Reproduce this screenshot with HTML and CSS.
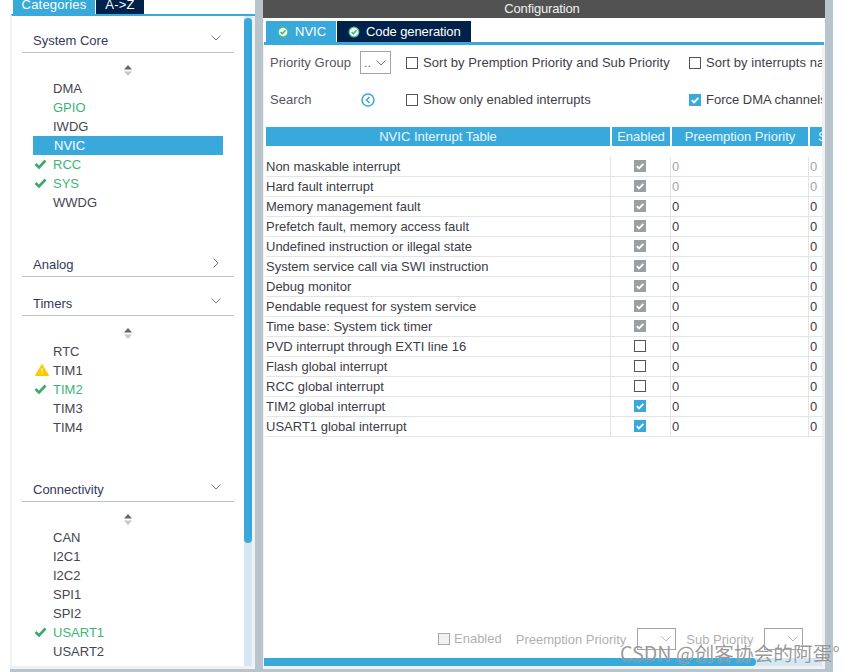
FILE: index.html
```html
<!DOCTYPE html>
<html lang="en">
<head>
<meta charset="utf-8">
<title>NVIC Configuration</title>
<link rel="stylesheet" href="styles.css">
</head>
<body>
<svg class="defs" width="0" height="0" aria-hidden="true">
  <symbol id="down" viewBox="0 0 10 6"><path d="M.5.5 5 5 9.500.5" fill="none" stroke="currentColor"/></symbol>
  <symbol id="right" viewBox="0 0 6 10"><path d="M.5.5 5 5 .5 9.500" fill="none" stroke="currentColor"/></symbol>
  <symbol id="spin" viewBox="0 0 8 11"><path d="M4 0 8 4.500H0Z" fill="#666"/><path d="M0 6.500H8L4 11Z" fill="#c8c8c8"/></symbol>
  <symbol id="ok" viewBox="0 0 12 10"><path d="M1 5 4.500 8.500 11 1.500" fill="none" stroke="#3fa96b" stroke-width="2.600"/></symbol>
  <symbol id="warn" viewBox="0 0 14 12"><path d="M7 .5 13.600 11.500H.4Z" fill="#fcc900" stroke="#fcc900" stroke-linejoin="round"/><path d="M7 4v4M7 9v1.200" stroke="#fff" stroke-width="1"/></symbol>
  <symbol id="tick" viewBox="0 0 12 12"><path d="M2.800 6.200 5 8.400 9.400 3.800" fill="none" stroke="#fff" stroke-width="1.800"/></symbol>
  <symbol id="done" viewBox="0 0 12 12"><circle cx="6" cy="6" r="5.500" fill="#4db88a"/><circle cx="6" cy="6" r="4.300" fill="#eef9f4"/><path d="M3.600 6 5.400 7.700 8.500 4.300" fill="none" stroke="#42b080" stroke-width="1.500"/></symbol>
</svg>
<div class="app">
  <div class="main">
    <aside class="left">
      <div class="left-tabs">
        <div class="ltab ltab-on">Categories</div>
        <div class="ltab ltab-off">A-&gt;Z</div>
      </div>
      <div class="left-body">
        <div class="tree">
          <div class="head"><span>System Core</span><svg class="chev"><use href="#down"/></svg></div>
          <div class="spin"><svg class="spin-ic"><use href="#spin"/></svg></div>
          <ul class="list">
            <li class="item"><span class="ic"></span>DMA</li>
            <li class="item good"><span class="ic"></span>GPIO</li>
            <li class="item"><span class="ic"></span>IWDG</li>
            <li class="item sel"><span class="ic"></span>NVIC</li>
            <li class="item good"><span class="ic"><svg class="ok"><use href="#ok"/></svg></span>RCC</li>
            <li class="item good"><span class="ic"><svg class="ok"><use href="#ok"/></svg></span>SYS</li>
            <li class="item"><span class="ic"></span>WWDG</li>
          </ul>
          <div class="head far"><span>Analog</span><svg class="chev-r"><use href="#right"/></svg></div>
          <div class="head near"><span>Timers</span><svg class="chev"><use href="#down"/></svg></div>
          <div class="spin"><svg class="spin-ic"><use href="#spin"/></svg></div>
          <ul class="list">
            <li class="item"><span class="ic"></span>RTC</li>
            <li class="item"><span class="ic"><svg class="warn"><use href="#warn"/></svg></span>TIM1</li>
            <li class="item good"><span class="ic"><svg class="ok"><use href="#ok"/></svg></span>TIM2</li>
            <li class="item"><span class="ic"></span>TIM3</li>
            <li class="item"><span class="ic"></span>TIM4</li>
          </ul>
          <div class="head far"><span>Connectivity</span><svg class="chev"><use href="#down"/></svg></div>
          <div class="spin"><svg class="spin-ic"><use href="#spin"/></svg></div>
          <ul class="list">
            <li class="item"><span class="ic"></span>CAN</li>
            <li class="item"><span class="ic"></span>I2C1</li>
            <li class="item"><span class="ic"></span>I2C2</li>
            <li class="item"><span class="ic"></span>SPI1</li>
            <li class="item"><span class="ic"></span>SPI2</li>
            <li class="item good"><span class="ic"><svg class="ok"><use href="#ok"/></svg></span>USART1</li>
            <li class="item"><span class="ic"></span>USART2</li>
            <li class="item"><span class="ic"></span>USART3</li>
          </ul>
        </div>
        <div class="vtrack"><div class="vthumb"></div></div>
      </div>
    </aside>
    <div class="split"></div>
    <section class="right">
      <div class="title">Configuration</div>
      <div class="rtabs">
        <div class="rtab rtab-on"><svg class="done"><use href="#done"/></svg>NVIC</div>
        <div class="rtab rtab-off"><svg class="done"><use href="#done"/></svg>Code generation</div>
      </div>
      <div class="tabline"></div>
      <div class="pane">
        <div class="tools">
          <div class="lbl">Priority Group</div>
          <div class="select sel-pg"><span>..</span><svg class="chev"><use href="#down"/></svg></div>
          <label class="opt opt-wide"><span class="box"></span>Sort by Premption Priority and Sub Priority</label>
          <label class="opt opt-wide"><span class="box"></span>Sort by interrupts names</label>
          <div class="lbl">Search</div>
          <svg class="go" viewBox="0 0 14 14"><circle cx="7" cy="7" r="6" fill="none" stroke="#39a9dc" stroke-width="1.500"/><path d="M8.500 4 5.500 7 8.500 10" fill="none" stroke="#39a9dc" stroke-width="1.600"/></svg>
          <label class="opt"><span class="box"></span>Show only enabled interrupts</label>
          <label class="opt"><span class="box box-on"><svg class="tick"><use href="#tick"/></svg></span>Force DMA channels Interrupts</label>
        </div>
        <div class="thead">
          <div class="th">NVIC Interrupt Table</div>
          <div class="th">Enabled</div>
          <div class="th">Preemption Priority</div>
          <div class="th th-cut">Sub Priority</div>
        </div>
        <div class="tbody">
          <div class="row muted"><div class="c-name">Non maskable interrupt</div><div class="c-en"><span class="box box-dis"><svg class="tick"><use href="#tick"/></svg></span></div><div class="c-num">0</div><div class="c-num">0</div></div>
          <div class="row muted"><div class="c-name">Hard fault interrupt</div><div class="c-en"><span class="box box-dis"><svg class="tick"><use href="#tick"/></svg></span></div><div class="c-num">0</div><div class="c-num">0</div></div>
          <div class="row"><div class="c-name">Memory management fault</div><div class="c-en"><span class="box box-dis"><svg class="tick"><use href="#tick"/></svg></span></div><div class="c-num">0</div><div class="c-num">0</div></div>
          <div class="row"><div class="c-name">Prefetch fault, memory access fault</div><div class="c-en"><span class="box box-dis"><svg class="tick"><use href="#tick"/></svg></span></div><div class="c-num">0</div><div class="c-num">0</div></div>
          <div class="row"><div class="c-name">Undefined instruction or illegal state</div><div class="c-en"><span class="box box-dis"><svg class="tick"><use href="#tick"/></svg></span></div><div class="c-num">0</div><div class="c-num">0</div></div>
          <div class="row"><div class="c-name">System service call via SWI instruction</div><div class="c-en"><span class="box box-dis"><svg class="tick"><use href="#tick"/></svg></span></div><div class="c-num">0</div><div class="c-num">0</div></div>
          <div class="row"><div class="c-name">Debug monitor</div><div class="c-en"><span class="box box-dis"><svg class="tick"><use href="#tick"/></svg></span></div><div class="c-num">0</div><div class="c-num">0</div></div>
          <div class="row"><div class="c-name">Pendable request for system service</div><div class="c-en"><span class="box box-dis"><svg class="tick"><use href="#tick"/></svg></span></div><div class="c-num">0</div><div class="c-num">0</div></div>
          <div class="row"><div class="c-name">Time base: System tick timer</div><div class="c-en"><span class="box box-dis"><svg class="tick"><use href="#tick"/></svg></span></div><div class="c-num">0</div><div class="c-num">0</div></div>
          <div class="row"><div class="c-name">PVD interrupt through EXTI line 16</div><div class="c-en"><span class="box"></span></div><div class="c-num">0</div><div class="c-num">0</div></div>
          <div class="row"><div class="c-name">Flash global interrupt</div><div class="c-en"><span class="box"></span></div><div class="c-num">0</div><div class="c-num">0</div></div>
          <div class="row"><div class="c-name">RCC global interrupt</div><div class="c-en"><span class="box"></span></div><div class="c-num">0</div><div class="c-num">0</div></div>
          <div class="row"><div class="c-name">TIM2 global interrupt</div><div class="c-en"><span class="box box-on"><svg class="tick"><use href="#tick"/></svg></span></div><div class="c-num">0</div><div class="c-num">0</div></div>
          <div class="row"><div class="c-name">USART1 global interrupt</div><div class="c-en"><span class="box box-on"><svg class="tick"><use href="#tick"/></svg></span></div><div class="c-num">0</div><div class="c-num">0</div></div>
        </div>
        <div class="foot">
          <span class="box box-off"></span><span class="foot-en">Enabled</span>
          <span class="foot-pre">Preemption Priority</span>
          <div class="select sel-f"><svg class="chev"><use href="#down"/></svg></div>
          <span class="foot-sub">Sub Priority</span>
          <div class="select sel-f"><svg class="chev"><use href="#down"/></svg></div>
        </div>
        <div class="htrack"><div class="hthumb"></div></div>
      </div>
    </section>
    <div class="edge"></div>
  </div>
  <div class="base"></div>
</div>
<div class="mark">CSDN @创客协会的阿蛋°</div>
</body>
</html>
```
FILE: styles.css
```css
* { box-sizing: border-box; }
html, body { margin: 0; padding: 0; }
body {
  position: relative;
  width: 855px;
  height: 672px;
  overflow: hidden;
  background: #fff;
  font-family: "Liberation Sans", Roboto, sans-serif;
  font-size: 13px;
  color: #45454f;
}
.defs { position: absolute; }
svg { display: block; flex: none; }
ul { list-style: none; margin: 0; padding: 0; }

.app { display: flex; flex-direction: column; width: 823px; height: 672px; margin-left: 10px; }
.main { display: flex; height: 669px; }
.base { height: 3px; background: #b8c4cb; }

.left { display: flex; flex-direction: column; width: 245px; background: #f1f1f2; }
.left-tabs { display: flex; height: 14px; padding-left: 3px; gap: 1px; background: #fff; overflow: hidden; }
.ltab { height: 14px; line-height: 10px; text-align: center; color: #fff; letter-spacing: .2px; }
.ltab-on { width: 82px; background: #39a9dc; }
.ltab-off { width: 48px; background: #00214a; }
.left-body { display: flex; height: 652px; margin-left: 1px; border-top: 2px solid #39a9dc; border-left: 1px solid #f1f1f2; }
.tree { width: 232px; height: 650px; padding-top: 14px; background: #fff; overflow: hidden; }
.head { display: flex; align-items: center; justify-content: space-between; width: 212px; height: 23px; margin-left: 10px; padding: 0 13px 0 11px; border-bottom: 1px solid #b9c2c9; line-height: 20px; color: #33395c; }
.far { margin-top: 42px; }
.near { margin-top: 16px; }
.chev { width: 10px; height: 6px; color: #777; margin-bottom: 6px; }
.chev-r { width: 6px; height: 10px; color: #777; margin: 0 2px 4px 0; }
.spin { display: flex; justify-content: center; height: 26px; padding: 12px 0 3px; margin-left: -1px; }
.spin-ic { width: 8px; height: 11px; }
.list { margin-left: 21px; width: 190px; }
.item { display: flex; height: 19px; line-height: 19px; }
.ic { display: flex; align-items: center; flex: none; width: 20px; padding: 0 0 2px 1px; }
.ok { width: 13px; height: 10px; }
.warn { width: 14px; height: 12px; margin-left: 1px; }
.good { color: #3eb478; }
.sel { background: #39a9dc; color: #fff; padding-left: 1px; }
.vtrack { width: 8px; height: 650px; background: #d5e7f5; }
.vthumb { width: 8px; height: 525px; margin-top: 2px; border-radius: 4px; background: #39a9dc; }

.split { width: 8px; background: #b8c4cb; }
.edge { width: 8px; background: #b8c4cb; }

.right { display: flex; flex-direction: column; width: 562px; background: #f1f1f2; }
.title { height: 18px; padding-right: 4px; background: #525252; color: #f0f0f0; text-align: center; line-height: 17px; letter-spacing: -.15px; }
.rtabs { display: flex; gap: 1px; height: 24px; padding: 3px 0 0 3px; background: #fff; }
.rtab { display: flex; align-items: center; height: 21px; padding-left: 11px; color: #fff; white-space: nowrap; }
.rtab-on { width: 70px; background: #39a9dc; }
.rtab-off { width: 134px; background: #00214a; letter-spacing: -.1px; }
.done { width: 12px; height: 12px; margin-right: 6px; }
.tabline { flex: none; width: 560px; height: 3px; margin-left: 1px; background: #39a9dc; }
.pane { display: flex; flex-direction: column; width: 558px; height: 621px; margin-left: 1px; background: #fff; overflow: hidden; }

.tools { display: grid; grid-template-columns: 90px 46px 283px 200px; grid-template-rows: 23px 23px; row-gap: 14px; align-items: center; padding: 6px 0 0 6px; white-space: nowrap; }
.lbl { color: #55555c; letter-spacing: .06px; }
.select { display: flex; align-items: center; justify-content: space-between; height: 23px; border: 1px solid #a0a4a8; }
.sel-pg { width: 31px; padding: 0 4px 0 3px; color: #777; }
.sel-pg .chev { margin: 0; }
.go { width: 14px; height: 14px; margin-left: 1px; }
.opt { display: flex; align-items: center; gap: 5px; color: #3e3e48; }
.opt-wide { letter-spacing: .06px; }
.box { display: block; flex: none; width: 12px; height: 12px; border: 1px solid #555; background: #fff; }
.box-on { border: 0; background: #39a9dc; }
.box-dis { border: 0; background: #9b9ea3; }
.box-off { border: 1px solid #a5a8ac; background: #f0f1f3; }
.tick { width: 12px; height: 12px; }

.thead { display: grid; grid-template-columns: 344px 58px 136px 12px; gap: 2px; height: 19px; margin: 16px 0 0 2px; overflow: hidden; }
.th { background: #39a9dc; color: #eaf6fc; text-align: center; line-height: 19px; white-space: nowrap; }
.th-cut { padding-left: 8px; text-align: left; overflow: hidden; }
.tbody { margin: 11px 0 0 2px; }
.row { display: grid; grid-template-columns: 344px 60px 138px 14px; height: 20px; border-bottom: 1px solid #e2e5e8; line-height: 19px; color: #3c3c46; }
.c-name { white-space: nowrap; }
.c-en { display: flex; justify-content: center; padding: 3px 2px 0 0; border-left: 1px solid #e2e5e8; }
.c-num { padding-left: 1px; border-left: 1px solid #e2e5e8; color: #3c3c46; }
.muted .c-num { color: #a3a6ad; }

.foot { display: flex; align-items: center; height: 22px; margin-top: auto; margin-bottom: 8px; padding-left: 174px; color: #b0b0b0; white-space: nowrap; }
.foot-en { margin: -2px 14px 0 4px; }
.foot-pre { margin-right: 11px; }
.foot-sub { margin: 0 11px 0 10px; }
.sel-f { justify-content: flex-end; width: 39px; height: 22px; padding-right: 4px; }
.sel-f .chev { margin: 0; color: #bbb; }
.htrack { flex: none; height: 8px; background: #d5e7f5; }
.hthumb { width: 492px; height: 8px; border-radius: 0 4px 4px 0; background: #39a9dc; }

.mark { position: absolute; left: 620px; top: 639px; font-family: "Noto Sans CJK SC", "Liberation Sans", sans-serif; font-size: 19.7px; line-height: 28px; color: rgba(120,120,120,.75); white-space: nowrap; text-shadow: 0 0 1px rgba(255,255,255,.7); }
```
